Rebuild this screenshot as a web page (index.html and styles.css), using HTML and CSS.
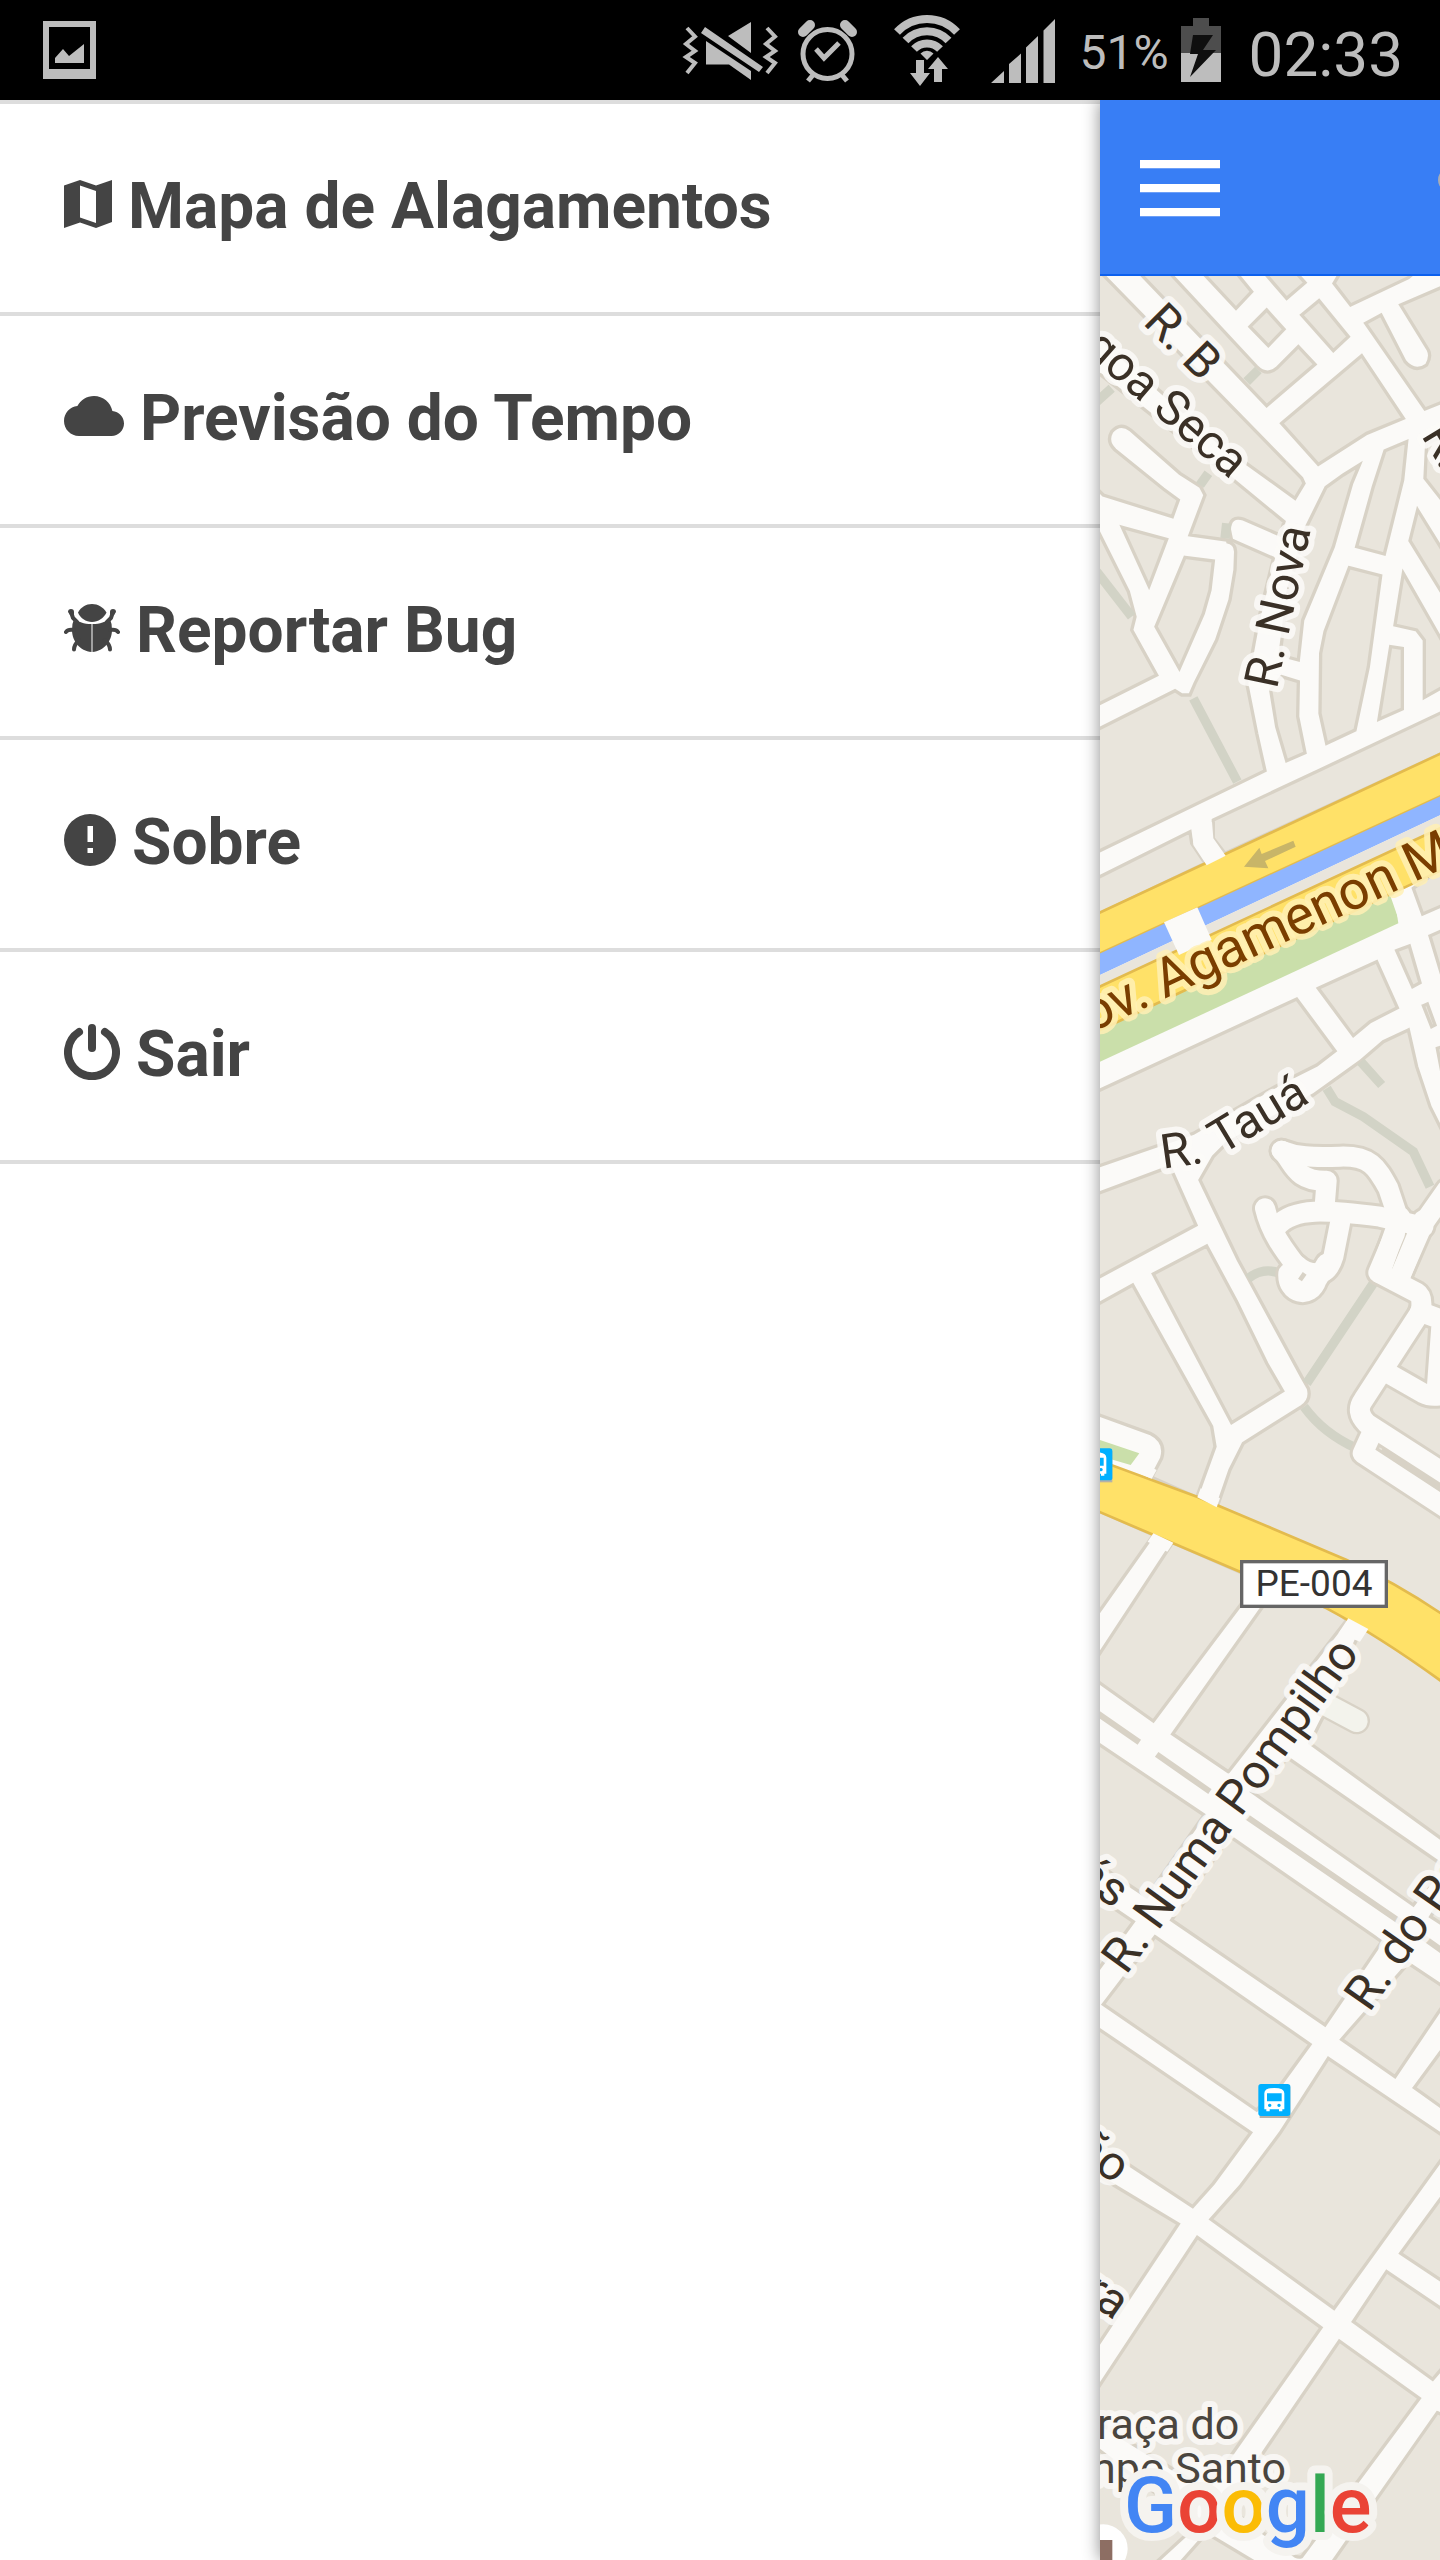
FILE: index.html
```html
<!DOCTYPE html>
<html lang="pt-BR">
<head>
<meta charset="utf-8">
<meta name="viewport" content="width=device-width, initial-scale=1">
<title>Mapa de Alagamentos</title>
<link rel="stylesheet" href="styles.css">
</head>
<body>
<header class="status">
  <svg class="status-picture" width="53" height="58" viewBox="43 22 53 58" aria-hidden="true"><path fill-rule="evenodd" d="M43 22H96V80H43ZM49 28V70H90V28Z"/><path d="M55 64V59L63 50 69 57 84 45V64Z"/></svg>
  <svg width="92" height="100" viewBox="688 0 92 100" aria-hidden="true" overflow="visible"><path class="line" d="M688 28 696 36.500 687 44 696 51 687 57 696 63 688 73M768 28 776 36.500 767 44 776 51 767 57 776 63 768 73"/><path d="M702 33 706 27 764 67 760 72ZM729 36 752 22V53ZM707 41 752 71V80L730 64.500H707Z"/></svg>
  <svg width="76" height="100" viewBox="792 0 76 100" aria-hidden="true"><circle class="line ring" cx="828.500" cy="54" r="24.500"/><path class="ear" d="M804 32 811 25M853 32 846 25"/><path class="line ring" d="M817 49 825 58 840 43M814 75 809 81M843 75 848 81"/></svg>
  <svg width="100" height="100" viewBox="880 0 100 100" aria-hidden="true"><path class="wave" d="M898 32A41 41 0 0 1 958 32M906.500 40.500A29.500 29.500 0 0 1 949.500 40.500M915 49A18 18 0 0 1 941 49"/><path d="M928 60 921.500 53.500A9 9 0 0 1 934.500 53.500ZM917 60H925V73H931L921 86 911 73H917ZM939 57 949 69H943V82H935V69H929Z"/></svg>
  <svg width="76" height="100" viewBox="992 0 76 100" aria-hidden="true"><path d="M992 83 1005 71V83ZM1010 83V64L1022 53.500V83ZM1027 83V47.500L1039 36V83ZM1044.500 83V30.500L1056 19V83Z"/></svg>
  <span class="charge">51%</span>
  <svg width="56" height="100" viewBox="1181 0 56 100" aria-hidden="true"><path class="dim" d="M1193 18H1209V26H1221V53H1181V26H1193Z"/><path d="M1181 53H1221V82H1181Z"/><path class="bolt" d="M1193 35H1213L1203 50H1216L1190 77 1198 54H1190Z"/></svg>
  <time class="clock">02:33</time>
</header>

<div class="app">
  <nav class="menu" aria-label="Menu">
    <a class="menu-item" href="#mapa"><svg width="48" height="48" viewBox="0 0 48 48" aria-hidden="true"><path fill-rule="evenodd" d="M0 5.500 16 0 32 5.500 48 0V42L32 48 16 42.500 0 48ZM16 5.500V37.500L32 43V11Z"/></svg>Mapa de Alagamentos</a>
    <a class="menu-item" href="#previsao"><svg width="60" height="40" viewBox="0 4 24 16" aria-hidden="true"><path d="M19.350 10.040C18.670 6.590 15.640 4 12 4 9.110 4 6.600 5.640 5.350 8.040 2.340 8.360 0 10.910 0 14c0 3.310 2.690 6 6 6h13c2.760 0 5-2.240 5-5 0-2.640-2.050-4.780-4.650-4.960z"/></svg>Previsão do Tempo</a>
    <a class="menu-item" href="#bug"><svg width="56" height="48" viewBox="0 0 56 48" aria-hidden="true"><path d="M14 8.500C17 3 22 0 28 0S39 3 42.500 8.500C40 14 34 18 28 18S16 14 14 8.500Z"/><path d="M10.500 14C14 18 20 20 27.500 20V48C16 47 8 37 8 26Q8 19 10.500 14ZM45.500 14C42 18 36 20 28.500 20V48C40 47 48 37 48 26Q48 19 45.500 14Z"/><path class="leg" d="M7 8 9 14 13 18M49 8 47 14 43 18M2 28Q4 25 10 26M54 28Q52 25 46 26M10 45.500Q10 41 15 36M46 45.500Q46 41 41 36"/><path d="M4 8a3 3 0 0 1 6 0v3H6ZM52 8a3 3 0 0 0-6 0v3h4Z"/></svg>Reportar Bug</a>
    <a class="menu-item" href="#sobre"><svg width="52" height="52" viewBox="0 0 52 52" aria-hidden="true"><path fill-rule="evenodd" d="M26 0a26 26 0 1 0 0 52a26 26 0 1 0 0-52ZM23.500 12H29V28H23.500ZM23.500 34H29V39H23.500Z"/></svg>Sobre</a>
    <a class="menu-item" href="#sair"><svg width="56" height="56" viewBox="0 0 56 56" aria-hidden="true"><path class="power" d="M28 4V24M15 8A24 24 0 1 0 41 8"/></svg>Sair</a>
  </nav>

  <main class="page">
    <div class="bar">
      <button class="toggle" type="button" aria-label="Abrir menu"><i></i><i></i><i></i></button>
      <svg class="bar-edge" width="2" height="16" viewBox="0 0 2 16" aria-hidden="true"><ellipse cx="5" cy="8" rx="5" ry="8"/></svg>
    </div>
    <svg class="map" viewBox="60 558 1020 6852" preserveAspectRatio="xMinYMin slice" role="img" aria-label="Mapa">
      <defs>
        <g id="lanes">
          <g transform="translate(0 2310)">
            <path d="M605 872C650 890 690 893 780 890S890 920 925 985L960 1090"/>
            <path d="M605 872C640 900 640 965 740 962L733 1050"/>
            <path d="M555 1045C570 1110 600 1160 690 1270"/>
            <path d="M590 1100C640 1040 740 1050 900 1070L1030 1100"/>
            <path d="M780 1090 760 1190Q745 1240 710 1240T650 1215"/>
            <path d="M625 1240C620 1300 690 1320 710 1260L740 1210"/>
            <path d="M1100 990 1030 1090 960 1250M960 1070 900 1240"/>
          </g>
          <g transform="translate(0 3450)">
            <path d="M945 -20 895 98 1010 158Q1030 170 1022 215L850 480Q825 515 860 550L1100 705"/>
            <path d="M1030 -60 960 110M880 570 848 640 1100 805M925 400 1030 460Q1060 475 1100 460M1020 215 1100 245M1085 245 1070 450"/>
          </g>
        </g>
        <g id="bus">
          <path class="bus-shade" d="M4 8H96V102H4Z"/>
          <rect class="bus-tile" width="96" height="96" rx="8"/>
          <path class="bus-body" fill-rule="evenodd" d="M18 28Q18 12 48 12T78 28V76H72V82H62V76H34V82H24V76H18ZM26 28V52H70V28ZM34 59a5 5 0 1 0 .1 0ZM62 59a5 5 0 1 0 .1 0Z"/>
        </g>
      </defs>
      <rect class="street-base" x="60" y="558" width="1020" height="6852"/>

      <g class="blocks">
        <path d="M50 535 665 1165 672 1180 645 1225 430 1070 50 735ZM50 845 460 1170 612 1295 600 1335 490 1287Q450 1275 448 1318L455 1352 330 1335 375 1215 362 1190 300 1150 152 1020Q120 995 95 1025 78 1055 105 1080L250 1197 295 1230 277 1280 70 1215 50 1195ZM270 550 530 830Q560 860 590 835L655 770 705 823 560 947 180 550ZM370 550 468 655 515 605 470 550ZM555 550 620 625 675 578 650 550ZM762 580 780 550H1000L985 563 812 645ZM510 710 560 660 612 718 565 767ZM665 675 717 632 805 740 760 782ZM962 645 1090 590V935L1035 957 857 700 903 675 975 815Q1005 850 1040 825 1055 800 1045 780ZM605 1000 845 797 970 985 860 1030 715 1123Z"/>
        <g transform="translate(0 1170)">
          <path d="M127 142 260 178 207 318ZM50 145 145 335 165 410 155 450 230 585 50 675ZM315 232 400 243 390 330 370 400 298 565 228 440ZM440 185Q467 190 467 215L465 270 450 360 410 480 345 610 330 645 305 645 285 632 50 750V1117L555 872 530 760 500 610 535 420 580 235 455 180ZM838 -45 815 10 760 200 668 420 655 540 600 525 625 330 680 140 738 22 790 -15ZM605 590 655 605 653 710 675 818 620 842 590 740 572 630ZM808 263 902 287 865 560 825 750 740 790 720 700 722 520 735 455ZM915 -88 980 -115 968 0 913 222 830 200 880 20ZM1040 -110 1090 -130V65L1035 -5ZM1013 90 1090 215V345L990 182ZM970 280 1090 490V620L1033 652V480L1010 450 945 435ZM932 500 967 505V687L897 718ZM400 1020 720 870 1090 695V818L435 1120 400 1075ZM50 1195 330 1055 335 1090 375 1150 50 1305Z"/>
        </g>
        <g transform="translate(0 2310)">
          <path d="M1000 85 1090 20V135L1028 162ZM50 695 650 417 765 573 710 615 640 650 530 710 340 820 50 920ZM715 385 890 305 952 443 870 485 820 527ZM950 272 988 258 1020 368 998 380ZM1050 228 1090 210V360ZM1030 437 1042 432 1065 495 1055 500ZM1072 565 1090 560V660ZM985 510 910 545 840 605 700 705 440 850 400 890 360 960 475 1200 600 1430 665 1550 685 1585Q695 1620 665 1640L490 1750 450 1830 410 1945 1090 2280V820L1050 740 1010 620ZM50 1002 270 920 348 1095 50 1255Z"/>
        </g>
        <g transform="translate(0 3450)">
          <path d="M50 195 158 135 395 560 405 620 350 772 215 712 245 655Q260 605 210 580L50 522ZM220 102 380 18 470 185 560 370 608 453 455 548ZM50 810 220 885 50 1125ZM278 908 580 1040 500 1070 220 1443 50 1322V1255Z"/>
        </g>
        <g transform="translate(0 4530)">
          <path d="M548 20H745L800 60 445 515 278 402ZM850 70 1090 240V720L690 430 740 330ZM625 475 1090 797 1000 915 515 575ZM50 428 372 645 200 890 50 790ZM50 890 160 965 50 1115ZM450 710 905 1025 735 1275 275 960ZM1052 950 1090 890V975ZM985 1090 1090 1160V1215L945 1430 785 1318ZM225 1010 690 1333 605 1450 530 1530 70 1213Z"/>
        </g>
        <g transform="translate(0 5610)">
          <path d="M50 203 512 518 400 670 338 740 50 550ZM745 295 1090 528V590L762 1045 393 778 480 680 600 520ZM1003 383 1090 265V445ZM50 645 295 792 50 1160ZM962 880 1090 705V965Z"/>
        </g>
        <g transform="translate(0 6510)">
          <path d="M352 -68 723 203 380 690 50 485V390ZM920 35 1090 150V320L1058 358 820 185ZM778 243 1018 415 665 890Q650 895 635 880L440 740ZM50 565 350 795 225 910H50ZM1072 458 1090 465V910H755ZM380 820 530 910H300Z"/>
        </g>
      </g>

      <!-- footpaths -->
      <g class="paths">
        <path d="M500 875 535 840M50 935 95 895M360 1185 385 1150M50 1445 155 1580M340 1825 472 2075M435 1345 440 1300"/>
        <path d="M740 2995 765 3035 850 3080 1000 3185 1050 3290M842 2915 905 2985M505 3565Q550 3530 600 3550M880 3580 680 3880M672 3950Q730 4030 830 4075"/>
      </g>

      <use href="#lanes" class="lane-edge"/>
      <use href="#lanes" class="lane"/>
      <path class="block-slit" d="M660 3570 674 3550M905 4080 1090 4195"/>
      <path class="cul-edge" d="M740 4845 830 4893"/>
      <path class="cul" d="M730 4840 830 4893"/>
      <path class="median" d="M50 4868 178 4957M230 4993 390 5105M500 5180 960 5495M1020 5535 1090 5585"/>

      <!-- Av. Agamenon Magalhães -->
      <g transform="translate(0 1170)">
        <path class="park" d="M50 1640 940 1230 955 1330 50 1750Z"/>
        <path class="highway" d="M50 1302 1090 817V945L50 1425Z"/>
        <path class="canal" d="M50 1425 1090 945V1001L50 1490Z"/>
        <path class="verge" d="M50 1490 1090 1001V1040L50 1524Z"/>
        <path class="highway" d="M50 1524 1090 1040V1168L50 1655Z"/>
        <path class="street-fill" d="M338 1060 396 1025 400 1075 437 1127 380 1156 340 1095ZM252 1327 352 1282 395 1380 297 1425ZM932 1250 990 1220 1015 1310 965 1345Z"/>
        <path class="arrow" d="M492 1160 538 1103 545 1122 640 1082 647 1100 555 1143 565 1165Z"/>
      </g>

      <!-- PE-004 -->
      <g transform="translate(0 3450)">
        <path class="park" d="M50 597 178 640 152 675 50 645Z"/>
        <path class="highway" d="M40 655 355 772 600 875 800 960Q950 1030 1090 1125V1328Q900 1190 740 1105L480 995 40 808Z"/>
        <path class="street-fill" d="M160 692 215 716 230 690 180 665ZM352 772 410 802 420 775 362 745ZM220 880 280 908 262 935 203 905ZM805 1135 865 1167 840 1205 775 1180Z"/>
        <rect class="shield" x="485" y="965" width="434" height="134"/>
        <text class="shield-text" x="702" y="1068">PE-004</text>
        <use href="#bus" x="1" y="625"/>
      </g>
      <use href="#bus" x="535" y="5982"/>

      <g class="labels">
        <text transform="translate(186 700) rotate(45)">R. B</text>
        <text class="end" transform="translate(452 1170) rotate(41)">Lagoa Seca</text>
        <text transform="translate(1022 1036) rotate(59)">R. A</text>
        <text transform="translate(590 1800) rotate(-78)">R. Nova</text>
        <text class="avenue" transform="translate(-68 2876) rotate(-25)">Gov. Agamenon Magalhães</text>
        <text transform="translate(248 3236) rotate(-8)">R.</text>
        <text transform="translate(424 3196) rotate(-31)">Tauá</text>
        <text transform="translate(138 5657) rotate(-54)">R. Numa Pompilho</text>
        <text transform="translate(868 5770) rotate(-55)">R. do Pombal</text>
        <text class="end" transform="translate(104 5458) rotate(35)">ás</text>
        <text class="end" transform="translate(106 6284) rotate(35)">ão</text>
        <text class="end" transform="translate(104 6692) rotate(35)">ra</text>
        <text class="place" x="478" y="7048">Praça do</text>
        <text class="place" x="618" y="7178">Campo Santo</text>
      </g>

      <circle class="pin" cx="70" cy="7376" r="73"/>
      <rect class="pin-mark" x="50" y="7350" width="47" height="80"/>
      <text class="logo" x="132" y="7327"><tspan class="blue">G</tspan><tspan class="red">o</tspan><tspan class="yellow">o</tspan><tspan class="blue">g</tspan><tspan class="green">l</tspan><tspan class="red">e</tspan></text>
    </svg>
  </main>
</div>
</body>
</html>
```
FILE: styles.css
```css
* { box-sizing: border-box; }

body {
  margin: 0;
  min-height: 100vh;
  display: flex;
  flex-direction: column;
  background: #fff;
  color: #444;
  font-family: Roboto, "Liberation Sans", sans-serif;
  overflow-x: hidden;
}

/* Status bar */
.status {
  height: 100px;
  padding: 0 37px 0 43px;
  display: flex;
  align-items: center;
  gap: 12px;
  background: #000;
  color: #bdbdbd;
  position: relative;
  z-index: 2;
}
.status svg { flex: none; fill: #bdbdbd; }
.status .status-picture { margin-right: auto; }
.status .line { fill: none; stroke: #bdbdbd; stroke-width: 4; }
.status .ring { stroke-width: 5; }
.status .ear { stroke: #bdbdbd; stroke-width: 10; stroke-linecap: round; }
.status .wave { fill: none; stroke: #bdbdbd; stroke-width: 8; }
.status .dim { fill: #4d4d4d; }
.status .bolt { fill: #0f0f0f; }
.charge { font-size: 48px; line-height: 56px; padding-top: 6px; }
.clock { font-size: 62px; line-height: 72px; padding-top: 10px; }

/* Drawer */
.app { flex: 1; display: flex; }
.menu {
  flex: 0 0 1100px;
  max-width: 80%;
  border-top: 4px solid #ddd;
}
.menu-item {
  display: flex;
  align-items: center;
  gap: 16px;
  height: 212px;
  padding: 0 64px 4px;
  border-bottom: 4px solid #ddd;
  color: #444;
  font-size: 64px;
  font-weight: 700;
  text-decoration: none;
  white-space: nowrap;
}
.menu-item svg { flex: none; margin-bottom: 4px; fill: #444; }
.leg { fill: none; stroke: #444; stroke-width: 4; stroke-linecap: round; }
.power { fill: none; stroke: #444; stroke-width: 8; stroke-linecap: round; }

/* Page behind the drawer */
.page {
  flex: 1;
  min-width: 0;
  display: flex;
  flex-direction: column;
  box-shadow: 0 0 16px rgba(0, 0, 0, .45);
  position: relative;
}
.bar {
  height: 176px;
  padding: 2px 0 0 40px;
  display: flex;
  align-items: center;
  justify-content: space-between;
  background: #387ef5;
  border-bottom: 2px solid #0c60ee;
}
.bar-edge { fill: #a9adb5; margin-bottom: 16px; }
.toggle {
  width: 80px;
  padding: 0;
  border: 0;
  background: none;
  display: grid;
  gap: 16px;
}
.toggle i { height: 8px; background: #fff; box-shadow: 0 1px 0 #6c9ff7; }

/* Map */
.map { flex: 1; display: block; width: 100%; min-height: 0; }
.street-base, .street-fill { fill: #fbfaf8; }
.blocks { fill: #e9e5dc; stroke: #d8d2c6; stroke-width: 10; }
.paths { fill: none; stroke: #d2d3c6; stroke-width: 28; }
.lane-edge, .lane { fill: none; stroke-linecap: round; stroke-linejoin: round; }
.lane-edge { stroke: #d8d2c6; stroke-width: 78; }
.lane { stroke: #fbfaf8; stroke-width: 60; }
.cul-edge, .cul { fill: none; stroke-linecap: round; }
.cul-edge { stroke: #d8d2c6; stroke-width: 80; }
.cul { stroke: #f3f3ec; stroke-width: 66; }
.median { stroke: #d8d2c6; stroke-width: 18; }
.block-slit { stroke: #d8d2c6; stroke-width: 14; }
.highway { fill: #ffe168; stroke: #e3bb4e; stroke-width: 8; }
.canal { fill: #8fb5ff; }
.verge { fill: #e9e5dc; }
.park { fill: #cadfaa; }
.arrow { fill: #c8b568; }
.shield { fill: #fff; stroke: #666; stroke-width: 10; }
.shield-text { font-size: 111px; text-anchor: middle; fill: #333; }
.bus-tile { fill: #00b0ff; }
.bus-shade { fill: #b5b1a8; }
.bus-body { fill: #fff; }
.labels text {
  font-size: 144px;
  fill: #3a3026;
  stroke: #fbfaf8;
  stroke-opacity: .85;
  stroke-width: 36;
  stroke-linejoin: round;
  paint-order: stroke;
}
.labels .avenue { font-size: 162px; fill: #7a3e00; stroke: #fff0b5; }
.labels .end { text-anchor: end; }
.labels .place { font-size: 129px; text-anchor: end; fill: #4a453e; }
.pin { fill: #fff; }
.pin-mark { fill: #8d6e63; }
.logo {
  font-size: 234px;
  font-weight: 500;
  stroke: #f5f3ef;
  stroke-width: 48;
  stroke-linejoin: round;
  paint-order: stroke;
}
.blue { fill: #4285f4; }
.red { fill: #ea4335; }
.yellow { fill: #fbbc05; }
.green { fill: #34a853; }
```
